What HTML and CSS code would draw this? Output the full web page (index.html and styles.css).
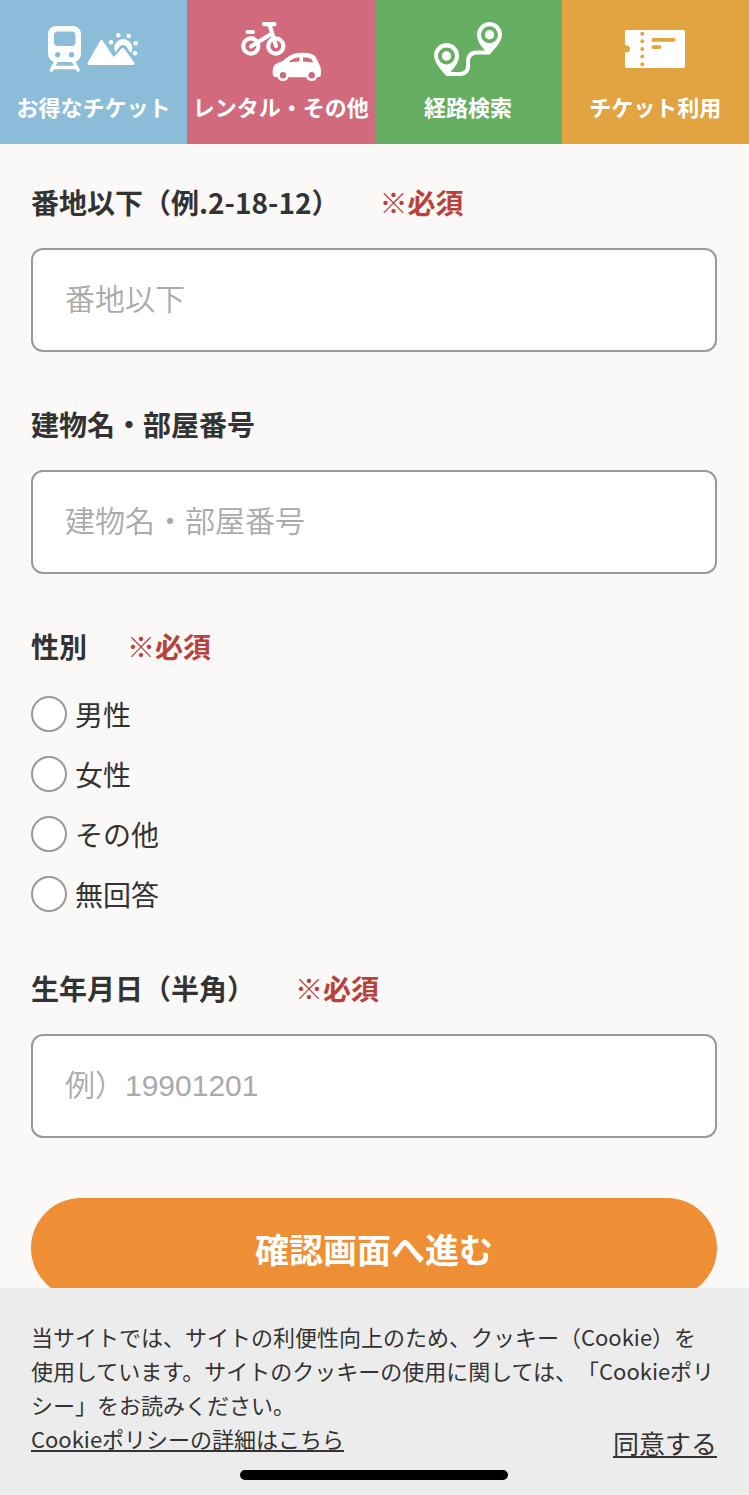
FILE: index.html
```
<!DOCTYPE html>
<html lang="ja">
<head>
    <meta charset="UTF-8">
    <meta name="viewport" content="width=device-width, initial-scale=1.0">
    <title>会員情報の入力</title>
    <link rel="stylesheet" href="styles.css">
</head>
<body>

<!-- メニュー -->
<nav class="menu">
    <a class="menu-item ticket" href="#">
        <svg width="92" height="60" viewBox="0 0 92 60" fill="#fff" aria-hidden="true">
            <path fill-rule="evenodd" d="M8 4h17a8 8 0 0 1 8 8v20a8 8 0 0 1-8 8H8a8 8 0 0 1-8-8V12a8 8 0 0 1 8-8zm2 5.500a4 4 0 0 0-4 4V20a4 4 0 0 0 4 4h13.500a4 4 0 0 0 4-4v-6.500a4 4 0 0 0-4-4zM9.700 30a2.700 2.700 0 1 0 0 5.400 2.700 2.700 0 0 0 0-5.400zm13.800 0a2.700 2.700 0 1 0 0 5.400 2.700 2.700 0 0 0 0-5.400z"/>
            <path d="M8 39.500L3.500 48M25.500 39.500L30 48M6 45.500h22" fill="none" stroke="#fff" stroke-width="3.600" stroke-linecap="round"/>
            <circle cx="75.300" cy="26" r="9"/>
            <path d="M65 42L75 27.500 85 42" fill="#8bbdd9" stroke="#8bbdd9" stroke-width="9" stroke-linejoin="round"/>
            <path d="M41 41.500L53.500 19.500 65.500 37.500 74.800 27.500 85 41.500z" stroke="#fff" stroke-width="3" stroke-linejoin="round"/>
            <circle cx="63" cy="20.300" r="2.300"/>
            <circle cx="70.300" cy="13.300" r="2.300"/>
            <circle cx="80.700" cy="14" r="2.300"/>
            <circle cx="87.700" cy="21.300" r="2.300"/>
            <circle cx="87" cy="31.300" r="2.300"/>
        </svg>
        <span>お得なチケット</span>
    </a>
    <a class="menu-item rental" href="#">
        <svg width="80" height="60" viewBox="0 0 80 60" aria-hidden="true">
            <g fill="none" stroke="#fff" stroke-width="4.200" stroke-linecap="round">
                <circle cx="9.800" cy="24" r="7.600"/>
                <circle cx="34.800" cy="24" r="7.600"/>
                <path d="M23 2.100h10.500M28.500 2.500L35 24M10 24.500L31 11.500"/>
                <path d="M6.500 10h5.500"/>
            </g>
            <path fill="#fff" d="M31.700 50C31.700 44 34 41 41 39.500L48 34C52 31.500 56 30.700 61 30.700c7 0 11 1 13.500 4l3.500 7q2 3 2 7v3q0 3-3 3.500H36q-4 0-4.300-3z"/>
            <circle cx="42" cy="53.300" r="5.800" fill="#fff"/>
            <circle cx="70.700" cy="53.300" r="5.800" fill="#fff"/>
            <circle cx="42" cy="53.300" r="3.200" fill="#d16a7c"/>
            <circle cx="70.700" cy="53.300" r="3.200" fill="#d16a7c"/>
            <path fill="#d16a7c" d="M47.500 40.300Q52 35.500 58.500 35.200V39.500zM62 35.200q6 0 8.500 2l2 3.300L62 39.500z"/>
        </svg>
        <span>レンタル・その他</span>
    </a>
    <a class="menu-item route" href="#">
        <svg width="68" height="60" viewBox="0 0 68 60" fill="#fff" aria-hidden="true">
            <path fill-rule="evenodd" d="M12.500 21A12.500 12.500 0 0 1 25 33.500C25 40 21 45 16 50.500L12.500 54C9 50 0 41 0 33.500A12.500 12.500 0 0 1 12.500 21zm0 4.500a8.500 8.500 0 1 0 0 17 8.500 8.500 0 0 0 0-17z"/>
            <circle cx="12.500" cy="34" r="4.700"/>
            <path fill-rule="evenodd" d="M55.500 0A12.500 12.500 0 0 1 68 12.500C68 20 59 29 55.500 32.500L52 29.500C47 24 43 19 43 12.500A12.500 12.500 0 0 1 55.500 0zm0 4.200a8.500 8.500 0 1 0 0 17 8.500 8.500 0 0 0 0-17z"/>
            <circle cx="55.500" cy="12.700" r="4.700"/>
            <path d="M12.500 52H25q9 0 9-8V40q0-9.500 9-9.500H55.500" fill="none" stroke="#fff" stroke-width="4"/>
        </svg>
        <span>経路検索</span>
    </a>
    <a class="menu-item use" href="#">
        <svg width="60" height="60" viewBox="0 0 60 60" aria-hidden="true">
            <path fill="#fff" d="M1.500 8h57Q60 8 60 9.500v35Q60 46 58.500 46h-57Q0 46 0 44.500V30.200H1.500a3.500 3.500 0 0 0 0-7H0V9.500Q0 8 1.500 8z"/>
            <g fill="#e1a440">
                <circle cx="17.300" cy="11.700" r="2"/>
                <circle cx="17.300" cy="19.300" r="2"/>
                <circle cx="17.300" cy="27" r="2"/>
                <circle cx="17.300" cy="34.600" r="2"/>
                <circle cx="17.300" cy="42.200" r="2"/>
                <rect x="26.500" y="16" width="24" height="3.800" rx="1.900"/>
                <rect x="26.500" y="23.200" width="10" height="3.800" rx="1.900"/>
            </g>
        </svg>
        <span>チケット利用</span>
    </a>
</nav>

<!-- 入力フォーム -->
<form class="form">
    <div class="field">
        <label class="title" for="banchi">番地以下（例.2-18-12）<span class="required">※必須</span></label>
        <input class="text" type="text" id="banchi" placeholder="番地以下" required>
    </div>

    <div class="field">
        <label class="title" for="tatemono">建物名・部屋番号</label>
        <input class="text" type="text" id="tatemono" placeholder="建物名・部屋番号">
    </div>

    <fieldset class="field gender">
        <legend class="title">性別<span class="required">※必須</span></legend>
        <label class="option"><input type="radio" name="gender" value="male" required>男性</label>
        <label class="option"><input type="radio" name="gender" value="female">女性</label>
        <label class="option"><input type="radio" name="gender" value="other">その他</label>
        <label class="option"><input type="radio" name="gender" value="none">無回答</label>
    </fieldset>

    <div class="field">
        <label class="title" for="birthday">生年月日（半角）<span class="required">※必須</span></label>
        <input class="text" type="text" inputmode="numeric" id="birthday" placeholder="例）19901201" required>
    </div>

    <button class="submit" type="submit">確認画面へ進む</button>
</form>

<!-- クッキーの同意 -->
<div class="cookie">
    <p>当サイトでは、サイトの利便性向上のため、クッキー（Cookie）を使用しています。サイトのクッキーの使用に関しては、「Cookieポリシー」をお読みください。</p>
    <div class="cookie-actions">
        <a href="#">Cookieポリシーの詳細はこちら</a>
        <button class="agree" type="button">同意する</button>
    </div>
    <div class="home-bar"></div>
</div>

</body>
</html>
```
FILE: styles.css
```
* {
    box-sizing: border-box;
}
body {
    margin: 0;
    background-color: #faf9f7;
    color: #333;
    font-family: "Noto Sans CJK JP", sans-serif;
    text-spacing-trim: space-all;
}
.menu {
    position: sticky;
    top: 0;
    display: grid;
    grid-template-columns: repeat(4, 1fr);
}
.menu-item {
    display: flex;
    flex-direction: column;
    align-items: center;
    gap: 8px;
    padding: 22px 0;
    color: #fff;
    font-size: 22px;
    font-weight: bold;
    line-height: 32px;
    text-decoration: none;
    white-space: nowrap;
}
.ticket {
    background-color: #8bbdd9;
}
.rental {
    background-color: #d16a7c;
}
.route {
    background-color: #65ae62;
}
.use {
    background-color: #e1a440;
}
.form {
    padding: 38px 32px 60px 31px;
}
.field {
    margin: 0 0 52px;
    padding: 0;
    border: none;
}
.title {
    display: block;
    margin-bottom: 26px;
    padding: 0;
    font-size: 28px;
    font-weight: bold;
    line-height: 40px;
}
.required {
    margin-left: 40px;
    color: #b9413c;
}
.text {
    display: block;
    width: 100%;
    height: 104px;
    padding: 0 32px;
    border: 2px solid #999;
    border-radius: 12px;
    background-color: #fff;
    color: #333;
    font-family: "Liberation Sans", "Noto Sans CJK JP", sans-serif;
    font-size: 30px;
}
.text::placeholder {
    color: #aaa;
    font-weight: 350;
}
.gender {
    margin-bottom: 44px;
}
.gender .title {
    margin-bottom: 18px;
}
.option {
    display: flex;
    align-items: center;
    gap: 8px;
    height: 60px;
    font-size: 28px;
}
.option input {
    appearance: none;
    width: 36px;
    height: 36px;
    margin: 0;
    border: 2px solid #999;
    border-radius: 50%;
    background-color: #fff;
}
.option input:checked {
    border: 10px solid #ef8f35;
}
.submit {
    display: block;
    width: 100%;
    height: 100px;
    margin-top: 60px;
    border: none;
    border-radius: 50px;
    background-color: #ef8f35;
    color: #fff;
    font-family: inherit;
    font-size: 34px;
    font-weight: bold;
    cursor: pointer;
}
.cookie {
    position: fixed;
    left: 0;
    right: 0;
    bottom: 0;
    padding: 31px 32px 15px 31px;
    background-color: #ececec;
    font-size: 22px;
    line-height: 34px;
}
.cookie p {
    margin: 0;
}
.cookie a {
    color: #333;
}
.cookie-actions {
    display: flex;
    justify-content: space-between;
    align-items: flex-end;
}
.agree {
    padding: 0;
    border: none;
    background: none;
    color: #333;
    font-family: inherit;
    font-size: 26px;
    line-height: 24px;
    text-decoration: underline;
    cursor: pointer;
}
.home-bar {
    width: 268px;
    height: 10px;
    margin: 15px auto 0;
    border-radius: 5px;
    background-color: #000;
}
```
